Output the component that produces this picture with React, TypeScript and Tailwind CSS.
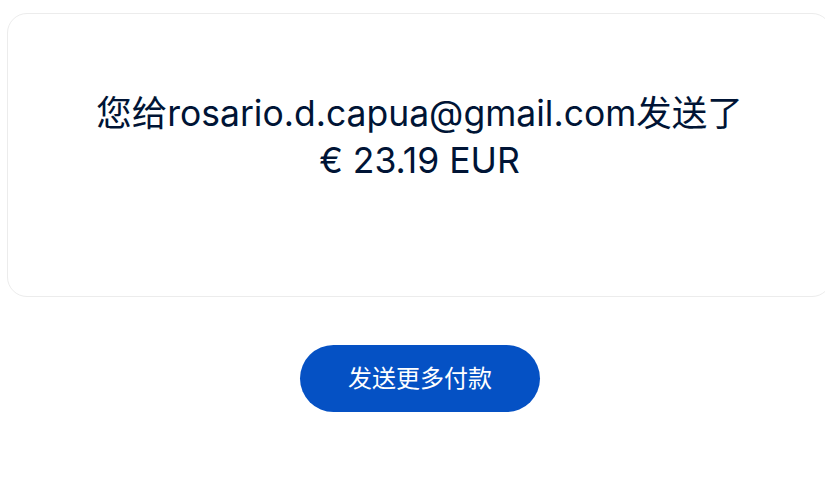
export default function App() {
  return (
    <div
      className="w-[825px] h-[493px] overflow-hidden bg-white text-[#001435]"
      style={{ fontFamily: 'Inter, "Noto Sans CJK SC", sans-serif' }}
    >
      <div className="pt-[13px] pl-[7px]">
        <div className="w-[825px] h-[284px] rounded-[20px] border border-[#ececec] flex flex-col items-center justify-center pb-[36px]">
          <p className="text-[35.5px] leading-[47px] text-center">您给rosario.d.capua@gmail.com发送了</p>
          <p className="text-[35.5px] leading-[47px] text-center">€ 23.19 EUR</p>
        </div>
      </div>
      <div className="flex justify-center mt-[48px] pl-[15px]">
        <button className="w-[240px] h-[67px] rounded-full bg-[#0551c4] text-white text-[24px]">
          发送更多付款
        </button>
      </div>
    </div>
  )
}
